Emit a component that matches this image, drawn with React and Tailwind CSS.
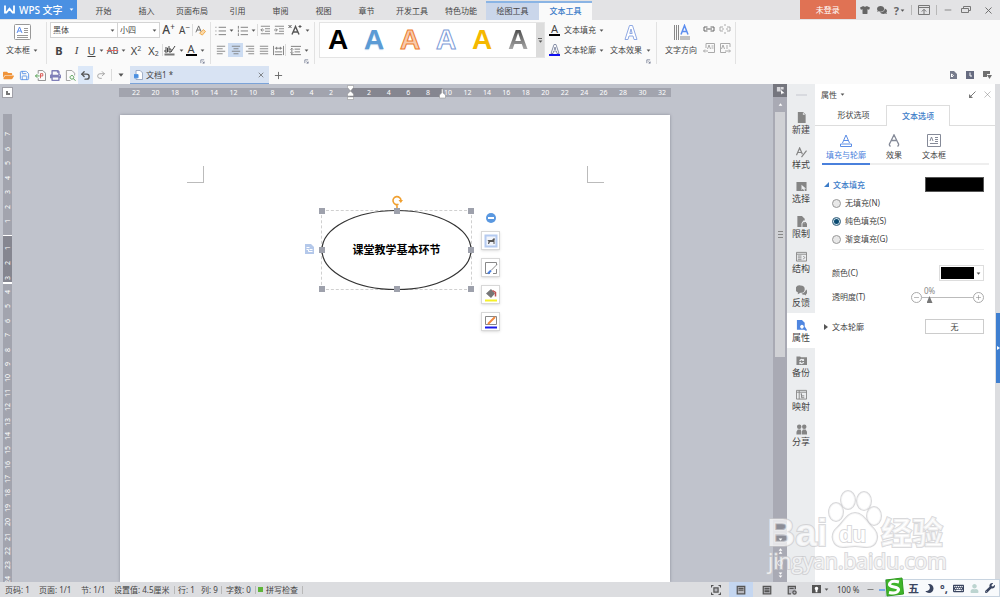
import React from 'react';
import { Minus, Plus, X, Undo2, Redo2, Save } from 'lucide-react';
import { FaTshirt, FaComments, FaFolderOpen, FaUser, FaKeyboard, FaMoon, FaWrench, FaPrint } from 'react-icons/fa';

const Caret = ({ className = '' }) => (
  <svg viewBox="0 0 6 4" className={`h-[3px] w-[5px] shrink-0 fill-[#555] ${className}`}>
    <path d="M0.5 0.5h5L3 3.8z" />
  </svg>
);

const Rule = () => <span className="h-3 w-px shrink-0 bg-[#dcdcdc]" />;

// Corner mark that opens a group's dialog
const Launcher = ({ className = '' }) => (
  <button aria-label="更多选项" className={`absolute bottom-0 ${className}`}>
    <svg viewBox="0 0 6 6" className="size-[5px] fill-none stroke-[#7a8096]">
      <path d="M1 5V1h4M3 3l2 2M5 3v2H3" />
    </svg>
  </button>
);

const menuTabs = [
  { label: '开始', width: 'w-[43px]' },
  { label: '插入', width: 'w-[43px]' },
  { label: '页面布局', width: 'w-[48px]' },
  { label: '引用', width: 'w-[43px]' },
  { label: '审阅', width: 'w-[43px]' },
  { label: '视图', width: 'w-[43px]' },
  { label: '章节', width: 'w-[43px]' },
  { label: '开发工具', width: 'w-[48px]' },
  { label: '特色功能', width: 'w-[50px]' },
];

const TitleBar = () => (
  <header className="flex h-5 shrink-0 items-stretch bg-[#e3e3e5]">
    <button className="flex h-[19px] w-[77px] shrink-0 items-center bg-[#4a90e2] text-white">
      <svg viewBox="0 0 12 10" className="ml-1 h-[9px] w-[11px] fill-none stroke-white stroke-2">
        <path d="M1 0.5v8h1.5L6 4l3.5 4.5H11v-8" />
      </svg>
      <span className="ml-1 text-[10px] font-medium">WPS 文字</span>
      <Caret className="ml-auto mr-[3px] fill-white" />
    </button>
    <nav className="ml-[5px] flex items-center pt-[2px]">
      {menuTabs.map((tab) => (
        <a key={tab.label} href="#" className={`text-center ${tab.width}`}>
          {tab.label}
        </a>
      ))}
    </nav>
    <a href="#" className="mt-px flex w-[53px] items-center justify-center border-t-2 border-[#8ab4e4] bg-[#cad6ea] pb-px">
      绘图工具
    </a>
    <a href="#" className="mt-px flex w-[53px] items-center justify-center border-t-2 border-[#8ab4e4] bg-[#fafafa] pb-px font-medium text-[#3c7cc8]">
      文本工具
    </a>
    <div className="ml-auto flex items-center">
      <button className="h-[19px] w-14 self-start bg-[#e07254] text-white">未登录</button>
      <button aria-label="皮肤" className="ml-1"><FaTshirt className="size-[10px] text-[#666]" /></button>
      <button aria-label="反馈" className="ml-[7px]"><FaComments className="size-[10px] text-[#666]" /></button>
      <button aria-label="帮助" className="ml-[7px] flex items-center gap-px text-[11px] font-bold text-[#666]">
        ?<Caret />
      </button>
      <span className="ml-[6px] h-[10px] w-px bg-[#b8b8b8]" />
      <button aria-label="隐藏功能区" className="ml-[6px]">
        <svg viewBox="0 0 12 12" className="size-[12px] fill-none stroke-[#777]">
          <path d="M0.5 1.5h11v9H0.5zM0.5 3.5h11M6 10V5.5M3.8 7.5L6 5.3l2.2 2.2" />
        </svg>
      </button>
      <span className="ml-[6px] h-[10px] w-px bg-[#b8b8b8]" />
      <button aria-label="最小化" className="ml-[6px]"><Minus className="size-[10px] text-[#777]" /></button>
      <button aria-label="还原" className="ml-2">
        <svg viewBox="0 0 10 10" className="size-[10px] fill-none stroke-[#777]">
          <path d="M2.5 3.5v-2h7v4h-2M0.5 3.5h7v4h-7z" />
        </svg>
      </button>
      <button aria-label="关闭" className="ml-3 mr-[6px]"><X className="size-[11px] text-[#666]" /></button>
    </div>
  </header>
);

const Tool = ({ label, width = 'w-[14px]', caret = false, active = false, children }) => (
  <button
    aria-label={label}
    className={`flex h-[14px] shrink-0 items-center justify-center gap-[3px] ${width} ${active ? 'bg-[#ccdcf2]' : ''}`}
  >
    {children}
    {caret && <Caret />}
  </button>
);

const Lines = ({ d, className = 'size-[12px] stroke-[#777]' }) => (
  <svg viewBox="0 0 12 12" className={`fill-none ${className}`}>
    <path d={d} />
  </svg>
);

const FontGroup = () => (
  <section className="relative flex w-[164px] flex-col gap-1 border-r border-[#e2e2e2] pl-[3px]">
    <div className="flex h-4 items-center">
      <div className="flex h-4 w-[68px] items-center border border-[#d4d4d4] bg-white px-[2px]">
        <select aria-label="字体" className="h-full flex-1 appearance-none bg-transparent">
          <option>黑体</option>
        </select>
        <Caret />
      </div>
      <div className="flex h-4 w-[42px] items-center border border-l-0 border-[#d4d4d4] bg-white px-[2px]">
        <select aria-label="字号" className="h-full flex-1 appearance-none bg-transparent">
          <option>小四</option>
        </select>
        <Caret />
      </div>
      <Tool label="增大字号" width="w-[17px]">
        <span className="text-[12px] font-medium">A<sup className="text-[8px]">+</sup></span>
      </Tool>
      <Tool label="减小字号" width="w-[15px]">
        <span className="text-[10px]">A<sup className="text-[8px]">−</sup></span>
      </Tool>
      <Rule />
      <Tool label="清除格式">
        <svg viewBox="0 0 12 12" className="size-[11px]">
          <path d="M1 8L4 1l3 7M2 5.5h4" className="fill-none stroke-[#666]" />
          <path d="M5 9l4-4 2.5 2L8 11z" className="fill-[#fbd9a8] stroke-[#eea646]" />
        </svg>
      </Tool>
    </div>
    <div className="flex h-4 items-center text-[11px]">
      <Tool label="加粗" width="w-[18px]"><b>B</b></Tool>
      <Tool label="倾斜" width="w-[17px]"><i className="font-['Liberation_Serif',serif]">I</i></Tool>
      <Tool label="下划线" width="w-[21px]" caret><u>U</u></Tool>
      <Tool label="删除线" width="w-[21px]" caret>
        <s className="text-[9px] decoration-[#e06666]">AB</s>
      </Tool>
      <Tool label="上标" width="w-[18px]"><span>X<sup className="text-[7px]">2</sup></span></Tool>
      <Tool label="下标" width="w-[17px]"><span>X<sub className="text-[7px]">2</sub></span></Tool>
      <Rule />
      <Tool label="突出显示" width="w-[22px]" caret>
        <svg viewBox="0 0 12 12" className="size-[12px] fill-none stroke-[#444]">
          <path d="M1 4h2.5v4H1V6h2.5M5 2v6h2V5H5M11 2L7 8" />
          <path d="M0.5 10.5h10" className="stroke-[#777] stroke-2" />
        </svg>
      </Tool>
      <Tool label="字体颜色" width="w-[20px]" caret>
        <span className="flex h-[12px] w-[11px] items-end justify-center border-b-2 border-black">A</span>
      </Tool>
    </div>
    <Launcher className="right-[5px]" />
  </section>
);

const bullets = 'M0.5 2.5h1M0.5 6.5h1M0.5 10.5h1M4 2.5h8M4 6.5h8M4 10.5h8';
const small = 'size-[10px] stroke-[#777]';
const medium = 'size-[11px] stroke-[#777]';

const ParagraphGroup = () => (
  <section className="relative flex w-[104px] flex-col gap-1 border-r border-[#e2e2e2] pl-[3px]">
    <div className="flex h-4 items-center">
      <Tool label="项目符号" width="w-[21px]" caret><Lines d={bullets} className={medium} /></Tool>
      <Tool label="编号" width="w-[22px]" caret>
        <Lines d="M1.5 1v3M1.5 5v3M1.5 9v3M4 2.5h8M4 6.5h8M4 10.5h8" className={medium} />
      </Tool>
      <Rule />
      <Tool label="减少缩进"><Lines d="M1 1.5h11M6 4.5h6M6 7.5h6M1 10.5h11M5 6H1M3 4L1 6l2 2" className={small} /></Tool>
      <Tool label="增加缩进"><Lines d="M1 1.5h11M6 4.5h6M6 7.5h6M1 10.5h11M0 6h4M2 4l2 2-2 2" className={small} /></Tool>
      <Tool label="中文版式" width="w-[26px]" caret>
        <svg viewBox="0 0 14 12" className="h-[12px] w-[14px] fill-none stroke-[#555]">
          <path d="M4 10.500L7.500 2.500l3.500 8M5.200 8h4.600" className="stroke-[1.400]" />
          <path d="M0.500 1l3 3M3.500 1l-3 3M10.500 2.500h3M12 1v3" />
        </svg>
      </Tool>
    </div>
    <div className="flex h-4 items-center">
      <Tool label="左对齐"><Lines d="M1 1.5h10M1 4.5h7M1 7.5h10M1 10.5h7" className={small} /></Tool>
      <Tool label="居中" width="w-[15px]" active><Lines d="M1 1.5h10M3 4.5h6M1 7.5h10M3 10.5h6" className={small} /></Tool>
      <Tool label="右对齐"><Lines d="M1 1.5h10M4 4.5h7M1 7.5h10M4 10.5h7" className={small} /></Tool>
      <Tool label="两端对齐"><Lines d="M1 1.5h10M1 4.5h10M1 7.5h10M1 10.5h10" className={small} /></Tool>
      <Tool label="分散对齐"><Lines d="M0.5 1v10M11.5 1v10M2 7.5h8M2 10.5h8M2 3.5h8M4 2v3M8 2v3" className={medium} /></Tool>
      <Rule />
      <Tool label="行距" width="w-[26px]" caret><Lines d="M1 1.5h11M5 4.5h6M5 7.5h6M1 10.5h11M2 4v5M0.5 5L2 3.5 3.5 5M0.5 8L2 9.5 3.5 8" className={medium} /></Tool>
    </div>
    <Launcher className="right-[5px]" />
  </section>
);

const wordArt = [
  'text-black',
  'text-[#5b9bd5] [text-shadow:0_1px_1px_#b5cfe8]',
  'text-[#f8cbad] [-webkit-text-stroke:1px_#ed7d31]',
  'text-white [-webkit-text-stroke:1px_#7c9bd8]',
  'text-[#f5b800]',
  'bg-linear-to-b from-[#404040] to-[#c0c0c0] bg-clip-text text-transparent',
];

const TextToolsGroup = () => (
  <section className="relative flex w-[342px] border-r border-[#e2e2e2] pl-1">
    <div className="flex h-[36px] w-[226px] border border-[#e4e4e4] bg-white">
      {wordArt.map((style, index) => (
        <button
          key={index}
          aria-label={`艺术字样式 ${index + 1}`}
          className="flex flex-1 items-center justify-center font-['Liberation_Sans',sans-serif] text-[28px] font-bold"
        >
          <span className={style}>A</span>
        </button>
      ))}
      <button aria-label="更多样式" className="flex w-2 flex-col items-center justify-center gap-px bg-[#dcdcdc]">
        <span className="h-px w-1 bg-[#666]" />
        <Caret />
      </button>
    </div>
    <div className="ml-1 flex flex-col gap-[6px] pt-px">
      <button className="flex h-[14px] items-center gap-[3px]">
        <span className="flex h-[12px] w-[11px] items-end justify-center border-b-2 border-black text-[11px]">A</span>
        <span className="ml-px">文本填充</span>
        <Caret />
      </button>
      <button className="flex h-[14px] items-center gap-[3px]">
        <span className="flex h-[12px] w-[11px] items-end justify-center border-b-2 border-[#1010f0] text-[11px]">
          <svg viewBox="0 0 10 10" className="size-[10px] fill-white stroke-[#8890a8]">
            <path d="M1 9.500L4 0.500h2l3 9H7L6.300 7H3.700L3 9.500zM4.300 5.500h1.400L5 3z" />
          </svg>
        </span>
        <span className="ml-px">文本轮廓</span>
        <Caret />
      </button>
    </div>
    <button className="ml-[6px] flex flex-col items-center gap-[5px] pt-[2px]">
      <svg viewBox="0 0 14 16" className="h-[17px] w-[14px] fill-white stroke-[#8fa9e4]">
        <path d="M1 15L5.500 1h3L13 15h-3l-1-3.500H5L4 15zM5.800 9h2.400L7 4.500z" />
      </svg>
      <span className="flex items-center gap-1">文本效果 <Caret /></span>
    </button>
    <Launcher className="right-[5px]" />
  </section>
);

const pale = 'size-[12px] stroke-[#aaa]';

const Ribbon = () => (
  <div className="flex h-[46px] shrink-0 bg-[#fafafa]">
    <div className="my-[2px] flex">
      <button className="flex w-[47px] flex-col items-center gap-[6px] border-r border-[#e2e2e2] pr-[2px] pt-[2px]">
        <svg viewBox="0 0 17 16" className="h-[16px] w-[17px] fill-white stroke-[#999]">
          <rect x="0.5" y="0.5" width="16" height="15" rx="1" />
          <path d="M3 9l2.5-6L8 9M4 7h3" className="stroke-[#5b8def]" />
          <path d="M10 4.5h4M10 6.5h4M10 8.5h4M3 11.5h11M3 13.5h11" />
        </svg>
        <span className="flex items-center gap-[3px]">文本框 <Caret /></span>
      </button>
      <FontGroup />
      <ParagraphGroup />
      <TextToolsGroup />
      <section className="flex w-[79px] border-r border-[#e2e2e2] pl-2">
        <button className="flex flex-col items-center gap-[5px] pt-[2px]">
          <svg viewBox="0 0 17 17" className="size-[17px] fill-none">
            <path d="M1.5 1v15M3.5 1v15M5.5 1v15M8 12v4M10 12v4M12 12v4M14 12v4M16 12v4" className="stroke-[#888]" />
            <path d="M8 10.5l3.5-9 3.5 9M9.2 7.5h4.6" className="stroke-[#5b8def] stroke-[1.5]" />
          </svg>
          <span>文字方向</span>
        </button>
        <div className="ml-[6px] grid grid-cols-2 content-start gap-x-1 gap-y-[5px]">
          <Tool label="创建链接" width="w-[12px]">
            <Lines d="M4.500 4H1v4h3.500M7.500 4H11v4H7.500M3 6h6" className="size-[12px] stroke-[#666]" />
          </Tool>
          <Tool label="断开链接" width="w-[12px]">
            <Lines d="M4 4H1v4h3M8 4h3v4H8M6 1v2M6 9v2M3 6h2M7 6h2" className={pale} />
          </Tool>
          <Tool label="上一文本框" width="w-[12px]">
            <Lines d="M3 6V1.5h8.5v9H5M4.5 7l1.5-4 1.5 4M8.5 4h2M8.5 6h2M5 9H0.5M2 7.5L0.5 9 2 10.5" className={pale} />
          </Tool>
          <Tool label="下一文本框" width="w-[12px]">
            <Lines d="M11 5V1.5H1.5v9H7M2.5 7L4 3l1.5 4M7 4h2M7 6h2M6 9h5M10 7.5L11.5 9 10 10.5" className={pale} />
          </Tool>
        </div>
      </section>
    </div>
  </div>
);

const DocumentTabs = () => (
  <div className="flex h-[18px] shrink-0 items-center bg-[#fafafa]">
    <div className="flex h-full items-center pl-px">
      <button aria-label="打开" className="flex w-[15px] justify-center"><FaFolderOpen className="size-[11px] text-[#f0943a]" /></button>
      <button aria-label="保存" className="flex w-4 justify-center"><Save className="size-[11px] text-[#5b93e6]" /></button>
      <button aria-label="输出为PDF" className="flex w-4 justify-center">
        <svg viewBox="0 0 12 12" className="size-[11px] fill-none stroke-[#888]">
          <path d="M3.5 4V0.5h5l3 3v8h-8V9" />
          <path d="M6 9V4h2.5v2.5H6" className="stroke-[#d9534f]" />
          <path d="M5 6.5H0.5M2.5 4.5l-2 2 2 2" className="stroke-[#4a9a4a]" />
        </svg>
      </button>
      <button aria-label="打印" className="flex w-[15px] justify-center"><FaPrint className="size-[11px] text-[#8080b8]" /></button>
      <button aria-label="打印预览" className="flex w-[15px] justify-center">
        <svg viewBox="0 0 12 12" className="size-[11px] fill-none stroke-[#999]">
          <path d="M6 11.5H1.5v-11h6l3 3V6" />
          <path d="M7.5 6a2 2 0 1 0 .1 0M9 9.5l2.5 2" className="stroke-[#4a9a4a]" />
        </svg>
      </button>
      <button aria-label="撤销" className="flex h-full w-[15px] items-center justify-center bg-[#dce8f8]"><Undo2 className="size-[11px] stroke-3 text-[#555]" /></button>
      <button aria-label="恢复" className="flex w-[15px] justify-center"><Redo2 className="size-[10px] text-[#999]" /></button>
    </div>
    <span className="ml-[3px] h-3 w-px bg-[#dcdcdc]" />
    <button aria-label="自定义" className="mx-[6px]"><Caret className="h-[4px] w-[6px]" /></button>
    <div className="flex h-full w-[139px] items-center border-b border-[#7ba3d8] bg-[#d8e3f3] px-1">
      <svg viewBox="0 0 11 12" className="h-[10px] w-[9px] fill-white stroke-[#8a9ab8]">
        <path d="M2.5 0.5h5l3 3v8h-8z" />
        <path d="M0 5.5h5v4H0zM1.5 7.5h2" className="fill-[#4a90e2] stroke-[#4a90e2]" />
      </svg>
      <span className="ml-[3px]">文档1 *</span>
      <button aria-label="关闭文档" className="ml-auto"><X className="size-2 text-[#555]" /></button>
    </div>
    <button aria-label="新建文档" className="ml-1"><Plus className="size-[11px] text-[#666]" /></button>
    <div className="ml-auto mr-2 flex gap-[9px]">
      <button aria-label="文档">
        <svg viewBox="0 0 8 8" className="size-2"><path d="M1 0h4l3 3v5H1z" className="fill-[#777c8c]" /><path d="M2.5 6V3l2 1.5L3 6" className="fill-none stroke-white" /></svg>
      </button>
      <button aria-label="历史">
        <svg viewBox="0 0 8 8" className="size-2"><path d="M0 0h8v8H0z" className="fill-[#666b80]" /><path d="M4 1.5V5h2" className="fill-none stroke-white" /></svg>
      </button>
      <button aria-label="列表">
        <svg viewBox="0 0 9 8" className="h-2 w-[9px] fill-[#707070]"><path d="M0 0h7v3H4v3H0zM4 4h5L6.500 8z" /></svg>
      </button>
    </div>
  </div>
);

const horizontalRuler = [
  { marks: [22, 20, 18, 16, 14, 12, 10, 8, 6, 4, 2], style: 'w-[231px] bg-[#a2a4ae] pl-[11px] pr-[13px]' },
  { marks: [2, 4, 6, 8], style: 'w-[92px] bg-[#858690] pl-[13px] pr-2' },
  { marks: [10, 12, 14, 16, 18, 20, 22, 24, 26, 28, 30, 32], style: 'w-[229px] bg-[#a2a4ae] pr-[3px]' },
];

const verticalRuler = [
  { marks: [7, 6, 5, 4, 3, 2, 1], style: 'h-[121px] bg-[#a2a4ae] pt-4 pb-[10px]' },
  { marks: [1, 2, 3], style: 'h-[47px] border-t border-white bg-[#858690] pt-2' },
  {
    marks: [4, 5, 6, 7, 8, 9, 10, 11, 12, 13, 14, 15, 16, 17, 18, 19, 20, 21, 22, 23, 24],
    style: 'h-[302px] border-t-2 border-white bg-[#a2a4ae] pt-1',
  },
];

const VerticalRuler = () => (
  <div className="flex w-[17px] shrink-0 flex-col overflow-hidden pt-[3px]">
    <button aria-label="制表符" className="ml-[2px] flex size-[11px] shrink-0 items-center justify-center border border-[#a0a0a8] bg-white">
      <span className="size-1 border-b-2 border-l-2 border-[#777]" />
    </button>
    <div className="ml-[3px] mt-4 w-[9px] text-[7px] text-white">
      {verticalRuler.map((part, index) => (
        <div key={index} className={`flex flex-col items-center justify-between ${part.style}`}>
          {part.marks.map((mark) => (
            <span key={mark} className="flex h-2 items-center justify-center [writing-mode:sideways-lr]">{mark}</span>
          ))}
        </div>
      ))}
    </div>
  </div>
);

const handles = [
  'left-0 top-0', 'left-1/2 top-0', 'left-full top-0',
  'left-0 top-1/2', 'left-full top-1/2',
  'left-0 top-full', 'left-1/2 top-full', 'left-full top-full',
];

const Ellipse = () => (
  <div className="absolute left-[201px] top-[95px] h-[80px] w-[151px] border border-dashed border-[#d0d0d0]">
    <svg viewBox="0 0 150 79" className="absolute left-0 top-0 h-[79px] w-[150px] overflow-visible">
      <ellipse cx="74.500" cy="39" rx="74.500" ry="39.500" className="fill-white stroke-[#333] stroke-[1.200]" />
    </svg>
    <p className="relative flex h-full items-center justify-center pb-px text-[11px] font-bold text-black">
      课堂教学基本环节
    </p>
    <svg viewBox="0 0 12 14" className="absolute -top-4 left-[69px] h-[14px] w-[12px] fill-none stroke-[#f0a030] stroke-[1.600]">
      <path d="M7.500 9.300A4 4 0 1 1 10 5.500M6 10v4" />
      <path d="M7.500 5h4.500L9.800 8z" className="fill-[#f0a030] stroke-none" />
    </svg>
    {handles.map((place) => (
      <span key={place} className={`absolute size-[6px] -translate-x-1/2 -translate-y-1/2 bg-[#9ea1ac] ${place}`} />
    ))}
  </div>
);

const FloatButton = ({ label, children }) => (
  <button aria-label={label} className="flex size-[19px] items-center justify-center border border-[#d8d8d8] bg-white shadow-sm">
    <svg viewBox="0 0 14 14" className="size-[14px] fill-none stroke-[#888]">{children}</svg>
  </button>
);

const Canvas = () => (
  <main className="flex min-w-0 flex-1 flex-col overflow-hidden">
    <div className="relative mx-auto mt-1 flex h-[9px] w-[552px] shrink-0 text-[7px] text-white">
      {horizontalRuler.map((part, index) => (
        <div key={index} className={`flex items-center justify-between ${part.style}`}>
          {part.marks.map((mark) => (
            <span key={mark} className="w-3 text-center">{mark}</span>
          ))}
        </div>
      ))}
      <svg viewBox="0 0 7 15" className="absolute -top-1 left-[228px] h-[17px] w-[7px] fill-white stroke-[#888] stroke-[0.500]">
        <path d="M0.500 0.500h6v2L3.500 6l3 3v2h-6V9l3-3-3-3.500zM0.500 12h6v2.500h-6z" />
      </svg>
      <svg viewBox="0 0 7 10" className="absolute left-[320px] top-0 h-[11px] w-[7px] fill-white stroke-[#888] stroke-[0.500]">
        <path d="M2.500 0.500h1.500v4l2.500 2v3h-6v-3l2-2z" />
      </svg>
    </div>
    <div className="relative mx-auto mt-[18px] w-[550px] flex-1 bg-white shadow-[0_0_3px_#8a8d98]">
      <span className="absolute left-[67px] top-[51px] size-[17px] border-b border-r border-[#bbb]" />
      <span className="absolute right-[66px] top-[51px] size-[17px] border-b border-l border-[#bbb]" />
      <Ellipse />
      <svg viewBox="0 0 9 10" className="absolute left-[185px] top-[129px] h-[10px] w-[9px] fill-[#b4c8ea]">
        <path d="M0 0h6l3 3v7H0z" />
        <path d="M1.500 3.500h3M1.500 5.500h2v2h4M4.500 5.500h3" className="fill-none stroke-white" />
      </svg>
      <div className="absolute left-[361px] top-[98px] flex flex-col items-center gap-2">
        <button aria-label="收起" className="flex size-[10px] items-center justify-center rounded-full bg-[#5a98e0]">
          <span className="h-[2px] w-[6px] bg-white" />
        </button>
        <FloatButton label="布局选项">
          <path d="M1.500 1.500h11v11h-11z" className="fill-[#f2f5fb] stroke-[#b4caf0] stroke-2" />
          <path d="M3.500 6H8l2-2 1 1-.5 1v4H9.500V8H6l-1 2H4l.5-2.500z" className="fill-[#555] stroke-none" />
        </FloatButton>
        <FloatButton label="形状样式">
          <path d="M6 12.500H1.500v-11h11V4M12.500 8v4.500H9M13 3.500L7 9.500" />
          <path d="M4 12.500L7 9.500" className="stroke-[#4a80e0] stroke-2" />
        </FloatButton>
        <FloatButton label="填充颜色">
          <path d="M2 5.500L7 1l4 4.500L7 10z" className="fill-[#777] stroke-none" />
          <path d="M8.500 2.500l3 2v4" className="stroke-[#c05050] stroke-[1.500]" />
          <path d="M1 12.500h12" className="stroke-[#f5f02a] stroke-2" />
        </FloatButton>
        <FloatButton label="轮廓颜色">
          <path d="M1.500 9.500v-8h11v8z" />
          <path d="M4 9L11 2" className="stroke-[#f08a40] stroke-2" />
          <path d="M1 12.500h12" className="stroke-[#1a1ae8] stroke-2" />
        </FloatButton>
      </div>
    </div>
  </main>
);

const ScrollBar = () => (
  <div className="flex w-[14px] shrink-0 flex-col items-center bg-[#a9aab4]">
    <button aria-label="选择窗格" className="flex h-[13px] w-full items-center justify-center bg-[#75767e]">
      <svg viewBox="0 0 10 10" className="size-[9px]">
        <path d="M1 1h4v5H1zM5.500 1h3v3h-3z" className="fill-[#d8d8dc]" />
        <path d="M5 4l4.500 4H7.500L6 9.500z" className="fill-white" />
      </svg>
    </button>
    <button aria-label="向上滚动" className="flex h-[15px] items-center">
      <Caret className="h-1 w-[7px] rotate-180 fill-white" />
    </button>
    <div className="flex h-[245px] w-[10px] flex-col items-center justify-center gap-[2px] bg-[#d0d1d5]">
      <span className="h-px w-[5px] bg-[#888]" />
      <span className="h-px w-[5px] bg-[#888]" />
      <span className="h-px w-[5px] bg-[#888]" />
    </div>
    <div className="mt-auto flex flex-col items-center gap-[6px] pb-1">
      <span className="h-[6px] w-[11px] bg-[#8c8d96]" />
      <button aria-label="向下滚动" className="flex h-[6px] w-[11px] items-center justify-center bg-[#8c8d96]"><Caret className="fill-white" /></button>
      <button aria-label="上一页" className="flex flex-col"><Caret className="rotate-180 fill-white" /><Caret className="rotate-180 fill-white" /></button>
      <button aria-label="选择浏览对象" className="size-[6px] rounded-full border border-white" />
      <button aria-label="下一页" className="flex flex-col"><Caret className="fill-white" /><Caret className="fill-white" /></button>
    </div>
  </div>
);

const sideItems = [
  { label: '新建', icon: <path d="M2 0h5l3.500 3.500V12H2zM7.500 0v3H11z" /> },
  { label: '样式', icon: <path d="M0.500 9L4 1l3 7M2 6h4M11.500 4L6 11" className="fill-none stroke-[#858585] stroke-[1.300]" /> },
  { label: '选择', icon: <path fillRule="evenodd" d="M0.500 1h11v10h-11zM6 4v6l1.500-1.500L9 11l1-1-1-1.500h2z" /> },
  { label: '限制', icon: <path fillRule="evenodd" d="M1.500 0h5l3 3v2H8L6 8v4H1.500zM7 8h5v4H7zM8 8V6.500h3V8h-1v-.7H9V8z" /> },
  { label: '结构', icon: <path d="M0.500 1.500h11v9.500H0.500zM0.500 3.500h11M2 5.500h4M2 7.500h4M2 9.500h4M8 5.500l1.500 1.500L8 9" className="fill-none stroke-[#858585]" /> },
  { label: '反馈', icon: <path d="M5 0.500a4.500 4 0 0 1 0 8L2 10V8A4.500 4 0 0 1 5 .5zM11 5a3 3 0 0 1 0 5v1.500L9.500 10.500A4 4 0 0 1 6 9.500C9 9 10.500 7 11 5z" /> },
  { label: '属性', active: true, icon: <path fillRule="evenodd" d="M1 0h5.500l3 3v4l2.500 4-1 1-2-1.500H1zM5 6a2 2 0 1 0 3 0 2 2 0 0 0-3 0z" /> },
  { label: '备份', icon: <path fillRule="evenodd" d="M0.500 1.500h4l1 1H12V11H0.500zM3.500 6.500A3 3 0 0 1 8 4.500l.8-.8V6.500H6l1-1a1.800 1.800 0 0 0-2 1.200zM9 7.500a3 3 0 0 1-4.500 2l-.8.800V7.500h2.500l-1 1a1.800 1.800 0 0 0 2.300-1z" /> },
  { label: '映射', icon: <path d="M0.500 1.500h11v9.500H0.500zM0.500 3.500h11M3.500 1.500V11M5 5.500h1.500M6 5v4.500h3M6 7.500h3" className="fill-none stroke-[#858585]" /> },
  { label: '分享', icon: <path d="M3.500 0.500a2.200 2.200 0 1 1 0 4.900A2.200 2.200 0 0 1 3.500.5zM9 .5a2.200 2.200 0 1 1 0 4.900A2.200 2.200 0 0 1 9 .5zM0.500 11.500V8.500L2 6h3l.8 2v3.500zM6.500 11.500V8l1-2h3L12 8.500v3z" /> },
];

const SideBar = () => (
  <aside className="flex w-7 shrink-0 flex-col items-center bg-[#ebedef]">
    <span className="mb-[9px] mt-[10px] h-[2px] w-[11px] shrink-0 bg-[#d8dadf]" />
    <div className="flex h-[347px] w-full shrink-0 flex-col">
      {sideItems.map((item) => (
        <button
          key={item.label}
          className={`flex flex-1 flex-col items-center justify-center gap-[2px] pt-px text-[9px] ${item.active ? 'bg-white' : ''}`}
        >
          <svg viewBox="0 0 12 12" className={`size-[11px] ${item.active ? 'fill-[#4f86e0]' : 'fill-[#858585]'}`}>
            {item.icon}
          </svg>
          <span>{item.label}</span>
        </button>
      ))}
    </div>
  </aside>
);

const fillOptions = [
  { label: '无填充(N)', value: 'none' },
  { label: '纯色填充(S)', value: 'solid' },
  { label: '渐变填充(G)', value: 'gradient' },
];

const PropertiesPanel = () => (
  <aside className="flex w-[180px] shrink-0 flex-col bg-white">
    <div className="flex h-[21px] items-center px-[6px]">
      <button className="flex items-center gap-[3px]">属性 <Caret /></button>
      <button aria-label="停靠" className="ml-auto">
        <svg viewBox="0 0 8 8" className="size-2 stroke-[#777]"><path d="M7.500 0.500L3 5" /><path d="M1 3v4h4z" className="fill-[#777] stroke-none" /></svg>
      </button>
      <button aria-label="关闭面板" className="-mr-1 ml-[6px]"><X className="size-[11px] stroke-1 text-[#777]" /></button>
    </div>
    <div className="flex h-[21px] shrink-0">
      <button className="w-[71px] border-b border-[#ddd] pl-[6px]">形状选项</button>
      <button className="w-[64px] border border-b-0 border-[#ddd] font-medium text-[#3c7cc8]">文本选项</button>
      <span className="flex-1 border-b border-[#ddd]" />
    </div>
    <div className="ml-[7px] mr-[6px] flex h-[39px] shrink-0">
      <button className="flex w-12 flex-col items-center justify-end gap-1 border-b-2 border-[#4a80dc] pb-1 text-[#4a80dc]">
        <svg viewBox="0 0 12 13" className="h-[13px] w-[12px] fill-none stroke-[#5b8de6]">
          <path d="M2.500 9L6 1l3.500 8M4 6.500h4M0.500 10h11v2.500H0.500z" />
        </svg>
        <span>填充与轮廓</span>
      </button>
      <button className="flex w-12 flex-col items-center justify-end gap-1 border-b-2 border-[#eee] pb-1">
        <svg viewBox="0 0 12 13" className="h-[13px] w-[12px] fill-none stroke-[#858a98] stroke-[1.300]">
          <path d="M2 9L6 0.800l4 8.200M3.500 6.500h5M2.500 12.500Q0.500 11 2 9M9.500 12.500Q11.500 11 10 9" />
        </svg>
        <span>效果</span>
      </button>
      <button className="flex w-8 flex-col items-center justify-end gap-1 border-b-2 border-[#eee] pb-1">
        <svg viewBox="0 0 14 13" className="h-[13px] w-[14px] fill-none stroke-[#858a98]">
          <path d="M0.500 0.500h13v12H0.500zM3 7l1.500-4L6 7M8 3.500h3M8 5.500h3M8 7.500h3M3 9.500h8" />
        </svg>
        <span>文本框</span>
      </button>
      <span className="flex-1 border-b-2 border-[#eee]" />
    </div>
    <div className="flex flex-col pl-[9px] pr-[11px]">
      <div className="mt-3 flex h-[15px] items-center">
        <svg viewBox="0 0 6 6" className="size-[5px] fill-[#3c7cc8]"><path d="M6 0v6H0z" /></svg>
        <h2 className="ml-1 font-medium text-[#3c7cc8]">文本填充</h2>
        <span className="ml-auto h-[15px] w-[59px] border border-[#555] bg-black" />
      </div>
      <div className="ml-2 mt-[2px] flex flex-col border-b border-[#eee] pb-px">
        {fillOptions.map((option) => (
          <label key={option.value} className="flex h-[18px] items-center gap-1">
            <input
              type="radio"
              name="fill"
              value={option.value}
              defaultChecked={option.value === 'solid'}
              className="size-[9px] appearance-none rounded-full border border-[#999] bg-[#e8e8e8] checked:border-[#5a7a90] checked:bg-[#0a4a70] checked:shadow-[inset_0_0_0_1px_#cfe4f0]"
            />
            {option.label}
          </label>
        ))}
      </div>
      <div className="mt-[15px] flex h-4 items-center pl-2">
        <span>颜色(C)</span>
        <button aria-label="颜色(C)" className="ml-auto flex h-4 w-[45px] items-center justify-between border border-[#ddd] pl-px pr-[2px]">
          <span className="h-[12px] w-[33px] bg-black" />
          <Caret />
        </button>
      </div>
      <div className="mt-2 flex h-4 items-center pl-2">
        <label htmlFor="opacity">透明度(T)</label>
        <div className="ml-auto flex items-center">
          <button aria-label="减少" className="flex size-[11px] items-center justify-center rounded-full border border-[#aaa]">
            <Minus className="size-[7px] text-[#888]" />
          </button>
          <div className="relative flex h-[11px] w-[51px] items-center">
            <output htmlFor="opacity" className="absolute -top-[5px] left-[2px] text-[#888]">0%</output>
            <span className="absolute inset-x-0 top-[5px] h-px bg-[#bbb]" />
            <input
              id="opacity"
              type="range"
              defaultValue="10"
              className="relative h-[11px] w-full appearance-none bg-transparent [&::-webkit-slider-thumb]:mt-[5px] [&::-webkit-slider-thumb]:h-[7px] [&::-webkit-slider-thumb]:w-[6px] [&::-webkit-slider-thumb]:appearance-none [&::-webkit-slider-thumb]:bg-[#777] [&::-webkit-slider-thumb]:[clip-path:polygon(50%_0,100%_100%,0_100%)]"
            />
          </div>
          <button aria-label="增加" className="flex size-[11px] items-center justify-center rounded-full border border-[#aaa]">
            <Plus className="size-[7px] text-[#888]" />
          </button>
        </div>
      </div>
      <div className="mt-[14px] flex h-[15px] items-center">
        <svg viewBox="0 0 4 6" className="h-[6px] w-1 fill-[#555]"><path d="M0 0l4 3-4 3z" /></svg>
        <h2 className="ml-1">文本轮廓</h2>
        <button className="ml-auto h-[15px] w-[59px] border border-[#ccc]">无</button>
      </div>
    </div>
  </aside>
);

const PanelHandle = () => (
  <div className="flex w-[5px] shrink-0 flex-col bg-[#dcdde0] pl-px pt-[229px]">
    <button aria-label="折叠面板" className="flex h-[70px] items-center justify-end bg-[#3f7fd0]">
      <svg viewBox="0 0 3 4" className="h-1 w-[3px] fill-white"><path d="M0 0l3 2-3 2z" /></svg>
    </button>
  </div>
);

const viewIcons = [
  { label: '全屏显示', d: 'M0.5 3V0.5H3M9 0.5h2.500V3M11.500 9v2.500H9M3 11.500H0.500V9M3.500 3.500h5v5h-5z', width: 'w-[27px]' },
  { label: '页面视图', d: 'M1.500 1.500h9v9h-9zM3 4h6M3 6h6', width: 'w-[24px]', active: true },
  { label: '大纲视图', d: 'M1.500 1.500h9v9h-9zM3 4h6M3 6h6M3 8h6', width: 'w-[27px]' },
  { label: 'Web视图', d: 'M10 5V1.500H1.500v9H5M3 4h5M7 9a2 2 0 1 0 4 0 2 2 0 1 0-4 0', width: 'w-[24px]' },
];

const StatusBar = () => (
  <footer className="flex h-[15px] shrink-0 items-center bg-[#dcdde0] pl-[5px]">
    <span className="w-[34px]">页码: 1</span>
    <span className="w-[42px]">页面: 1/1</span>
    <span className="w-[33px]">节: 1/1</span>
    <span className="w-[60px]">设置值: 4.5厘米</span>
    <span className="w-[27px] border-l border-[#b8b8b8] pl-[3px]">行: 1</span>
    <span className="w-[20px]">列: 9</span>
    <span className="w-[34px] border-l border-[#b8b8b8] pl-1">字数: 0</span>
    <button className="flex w-[48px] items-center gap-[3px] border-x border-[#b8b8b8] pl-[2px]">
      <span className="size-[5px] bg-[#5fb53a]" />
      拼写检查
    </button>
    <div className="ml-auto flex h-full items-center pr-[107px]">
      {viewIcons.map((view) => (
        <button
          key={view.label}
          aria-label={view.label}
          className={`flex h-full items-center justify-center ${view.width} ${view.active ? 'bg-[#c4d6f0]' : ''}`}
        >
          <svg viewBox="0 0 12 12" className="size-[10px] fill-[#b8b8be] stroke-[#555] stroke-[1.500]"><path d={view.d} /></svg>
        </button>
      ))}
      <button aria-label="护眼模式" className="ml-2 flex items-center gap-[3px]">
        <svg viewBox="0 0 10 10" className="size-[9px]"><path d="M0 0h10v9H0z" className="fill-[#555]" /><path d="M3 4a2 2 0 1 1 4 0L6 6v2H4V6z" className="fill-white" /></svg>
        <Caret />
      </button>
      <button className="ml-2 w-[28px] text-left">100 %</button>
      <button aria-label="缩小" className="ml-px"><Minus className="size-[9px] text-[#666]" /></button>
      <span className="ml-1 h-[2px] w-[14px] bg-[#7baae8]" />
    </div>
  </footer>
);

const ImeBar = () => (
  <div className="absolute bottom-0 right-0 flex h-[18px] w-[115px] items-center border border-[#c8d4e0] bg-[#f8fafc] text-[#3a4560]">
    <svg viewBox="0 0 20 20" className="-ml-[2px] mb-[2px] size-[20px] shrink-0">
      <path d="M2 3l16-2 1.500 16L3 19z" className="fill-[#3fb52a] stroke-[#2f9a1e]" />
      <path d="M15 5Q8 3 6 6t4 4 4 4-9 1.500" className="fill-none stroke-white stroke-[3]" />
    </svg>
    <button className="ml-1 text-[11px] font-bold">五</button>
    <button aria-label="半角" className="ml-[6px]"><FaMoon className="size-[9px] -scale-x-100" /></button>
    <button aria-label="标点" className="ml-[6px] text-[11px] font-bold">°,</button>
    <button aria-label="软键盘" className="ml-[5px]"><FaKeyboard className="size-[11px]" /></button>
    <button aria-label="账户" className="ml-[6px]"><FaUser className="size-[9px] text-[#bcd4d0]" /></button>
    <button aria-label="设置" className="ml-[6px]"><FaWrench className="size-[10px]" /></button>
  </div>
);

const Watermark = () => (
  <svg
    viewBox="0 0 185 90"
    className="pointer-events-none absolute bottom-[18px] right-[49px] h-[90px] w-[185px] fill-white/70 stroke-[#c8c8cb]/70 stroke-2 [paint-order:stroke]"
  >
    <text x="1" y="57" fontSize="39" className="font-['Liberation_Sans',sans-serif] font-bold">Bai</text>
    <ellipse cx="70" cy="23" rx="7" ry="9" />
    <ellipse cx="82" cy="11" rx="7" ry="9" />
    <ellipse cx="98" cy="12" rx="7" ry="9" />
    <ellipse cx="108" cy="27" rx="7" ry="9" />
    <path d="M89 24c8 0 12 9 17 14 9 8 5 20-5 20-5 0-8-1-12-1s-8 1-12 1c-10 0-14-12-6-19 7-6 10-15 18-15z" />
    <text x="73" y="53" fontSize="22" className="fill-white font-['Liberation_Sans',sans-serif] font-bold">du</text>
    <text x="115" y="55" fontSize="31" className="font-['Noto_Sans_CJK_SC',sans-serif] font-bold">经验</text>
    <text x="2" y="80" fontSize="21" className="font-['Open_Sans',sans-serif] font-medium">jingyan.baidu.com</text>
  </svg>
);

const App = () => (
  <div className="relative flex h-screen flex-col overflow-hidden bg-[#c0c3cc] font-['Noto_Sans','Noto_Sans_CJK_SC',sans-serif] text-[8px] leading-none text-[#444]">
    <TitleBar />
    <Ribbon />
    <DocumentTabs />
    <div className="flex min-h-0 flex-1">
      <VerticalRuler />
      <Canvas />
      <ScrollBar />
      <SideBar />
      <PropertiesPanel />
      <PanelHandle />
    </div>
    <StatusBar />
    <Watermark />
    <ImeBar />
  </div>
);

export default App;
